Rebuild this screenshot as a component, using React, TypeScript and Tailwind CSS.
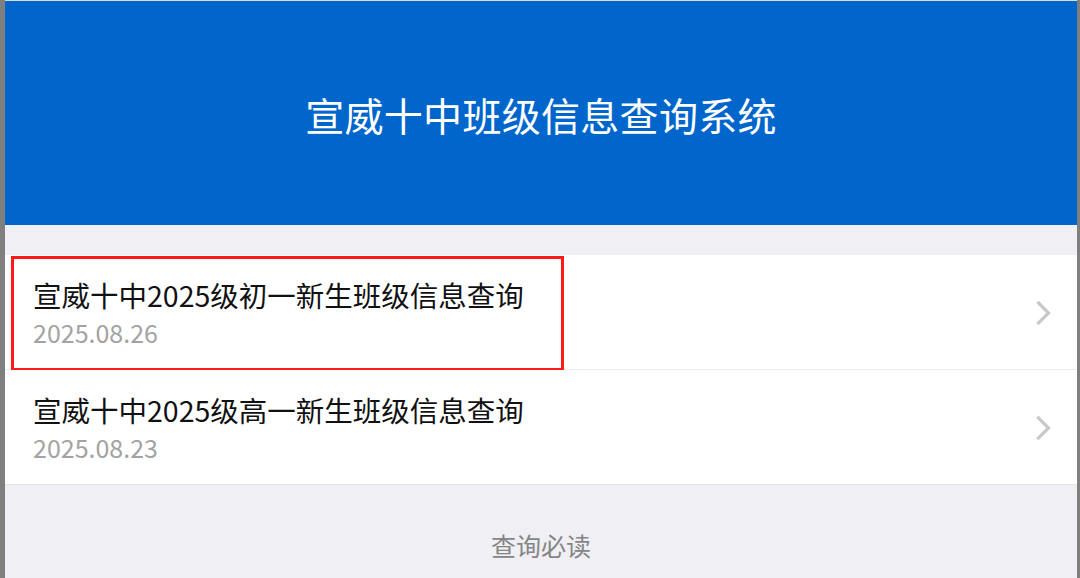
import React from "react";

const font = { fontFamily: '"Noto Sans CJK SC", "Noto Sans", sans-serif' };

function Chevron() {
  return (
    <svg width="16" height="24" viewBox="0 0 16 24" className="shrink-0">
      <path d="M2.5 2 L12.5 12 L2.5 22" fill="none" stroke="#c7c7cc" strokeWidth="3.2" strokeLinecap="square" />
    </svg>
  );
}

function Row({ title, date, last, highlighted }: { title: string; date: string; last?: boolean; highlighted?: boolean }) {
  return (
    <div className={`relative flex items-start bg-white h-[115px] ${last ? "border-b border-[#e3e3e6]" : "border-b border-[#ececef]"}`}>
      <div className="flex-1 pl-[28px] pt-[22px]">
        <div className="text-[28.5px] leading-[36px] text-[#111111]">{title}</div>
        <div className="text-[25px] leading-[38px] text-[#a3a3a3]">{date}</div>
      </div>
      <div className="self-center pr-[25px] pt-[2px]">
        <Chevron />
      </div>
      {highlighted && (
        <div className="absolute left-[6px] top-[1px] w-[553px] h-[115px] border-[3px] border-[#ff1a1a] pointer-events-none" />
      )}
    </div>
  );
}

export default function App() {
  return (
    <div className="w-[1080px] h-[578px] overflow-hidden flex bg-[#efeff4]" style={font}>
      <div className="w-[5px] bg-[#7f7f7f] shrink-0" />
      <div className="flex-1 flex flex-col">
        <div className="h-[1px] bg-[#dcdcdc]" />
        <div className="h-[224px] bg-[#0066cc] flex items-center justify-center pt-[2px]">
          <h1 className="text-[39px] leading-[48px] text-white font-normal tracking-[0.3px]">宣威十中班级信息查询系统</h1>
        </div>
        <div className="h-[30px] bg-[#efeff4]" />
        <Row title="宣威十中2025级初一新生班级信息查询" date="2025.08.26" highlighted />
        <Row title="宣威十中2025级高一新生班级信息查询" date="2025.08.23" last />
        <div className="flex justify-center pt-[44px]">
          <span className="text-[25px] leading-[32px] text-[#858585]">查询必读</span>
        </div>
      </div>
      <div className="w-[3px] bg-[#7f7f7f] shrink-0" />
    </div>
  );
}
